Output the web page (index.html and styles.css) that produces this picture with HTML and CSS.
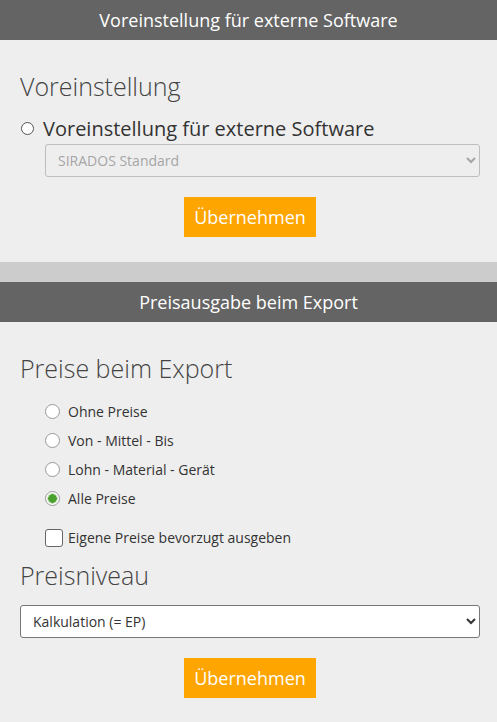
FILE: index.html
```html
<!DOCTYPE html>
<html lang="de">

<head>
    <meta charset="UTF-8">
    <meta name="viewport" content="width=device-width, initial-scale=1.0">
    <title>Export-Einstellungen</title>
    <link rel="stylesheet" href="styles.css">
</head>

<body>
    <!-- Voreinstellung -->
    <div class="panel-title">Voreinstellung für externe Software</div>
    <div class="panel">
        <h2>Voreinstellung</h2>
        <label class="preset-option">
            <input type="radio" name="preset">
            Voreinstellung für externe Software
        </label>
        <div class="preset-select">
            <select disabled>
                <option>SIRADOS Standard</option>
            </select>
        </div>
        <div class="actions">
            <button class="apply-btn">Übernehmen</button>
        </div>
    </div>

    <div class="divider"></div>

    <!-- Preisausgabe -->
    <div class="panel-title">Preisausgabe beim Export</div>
    <div class="panel">
        <h2>Preise beim Export</h2>
        <div class="price-options">
            <label class="option"><input type="radio" name="prices"> Ohne Preise</label>
            <label class="option"><input type="radio" name="prices"> Von - Mittel - Bis</label>
            <label class="option"><input type="radio" name="prices"> Lohn - Material - Gerät</label>
            <label class="option"><input type="radio" name="prices" checked> Alle Preise</label>
            <label class="option check"><input type="checkbox"> Eigene Preise bevorzugt ausgeben</label>
        </div>

        <h2>Preisniveau</h2>
        <select class="level-select">
            <option>Kalkulation (= EP)</option>
        </select>
        <div class="actions">
            <button class="apply-btn">Übernehmen</button>
        </div>
    </div>
</body>

</html>
```

FILE: styles.css
```css
body {
    font-family: "Open Sans", "Liberation Sans", sans-serif;
    background-color: #eeeeee;
    color: #333;
    margin: 0;
}

.panel-title {
    background-color: #646464;
    color: white;
    height: 40px;
    line-height: 40px;
    font-size: 18px;
    text-align: center;
}

.panel {
    padding: 29px 17px 25px 20px;
}

.panel h2 {
    font-size: 25px;
    font-weight: 300;
    color: #444;
    line-height: 35px;
    margin: 0;
}

.divider {
    height: 20px;
    background-color: #cccccc;
}

.preset-option {
    display: flex;
    align-items: center;
    gap: 9px;
    font-size: 20px;
    line-height: 27px;
    margin-top: 11px;
    color: #333;
}

.preset-option input {
    appearance: none;
    width: 13px;
    height: 13px;
    margin: 0 0 0 1px;
    border: 1px solid #555;
    border-radius: 50%;
    background: white;
}

.preset-select {
    padding-left: 25px;
    margin-top: 2px;
}

.preset-select select {
    width: 100%;
    height: 33px;
    padding: 0 8px;
    font-family: inherit;
    font-size: 14px;
    color: #888;
    background-color: #eeeeee;
    border: 1px solid #aaa;
    border-radius: 3px;
}

.actions {
    display: flex;
    justify-content: center;
    margin-top: 20px;
}

.apply-btn {
    background-color: #ffa500;
    color: white;
    border: none;
    width: 132px;
    height: 40px;
    font-family: inherit;
    font-size: 18px;
    cursor: pointer;
}

.price-options {
    display: flex;
    flex-direction: column;
    padding: 11px 0 6px 25px;
}

.option {
    display: flex;
    align-items: center;
    gap: 8px;
    height: 29px;
    font-size: 14px;
    color: #333;
}

.option input[type="radio"] {
    appearance: none;
    width: 15px;
    height: 15px;
    margin: 0;
    border: 1px solid #999;
    border-radius: 50%;
    background: white;
}

.option input[type="radio"]:checked {
    background: radial-gradient(circle, #4aa02c 0 4px, #c8e0c0 4.5px 5px, white 5.5px);
}

.option.check {
    margin-top: 10px;
    gap: 5px;
}

.option input[type="checkbox"] {
    appearance: none;
    width: 18px;
    height: 18px;
    margin: 0;
    border: 1px solid #666;
    border-radius: 3px;
    background: white;
}

.level-select {
    display: block;
    width: 100%;
    height: 33px;
    margin-top: 12px;
    padding: 0 8px;
    font-family: inherit;
    font-size: 14px;
    color: #333;
    background-color: white;
    border: 1px solid #777;
    border-radius: 3px;
}
```
